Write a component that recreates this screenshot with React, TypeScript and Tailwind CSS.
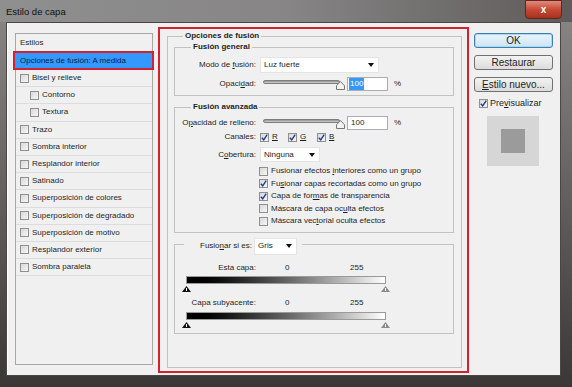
import React from 'react';

const LINE = 'border-[#c2c2c2]';

const STYLES: [string, boolean][] = [
  ['Bisel y relieve', false],
  ['Contorno', true],
  ['Textura', true],
  ['Trazo', false],
  ['Sombra interior', false],
  ['Resplandor interior', false],
  ['Satinado', false],
  ['Superposición de colores', false],
  ['Superposición de degradado', false],
  ['Superposición de motivo', false],
  ['Resplandor exterior', false],
  ['Sombra paralela', false],
];

function Check({ on = false }: { on?: boolean }) {
  return (
    <span className="w-[9px] h-[9px] shrink-0 border border-[#8e8f8f] bg-gradient-to-br from-[#d9d9d9] to-[#f6f6f6] flex items-center justify-center">
      {on && (
        <svg width="7" height="7" viewBox="0 0 7 7">
          <path d="M0.8 3.8 L2.7 5.8 L6.2 0.6" fill="none" stroke="#1d3f91" strokeWidth="1.4" />
        </svg>
      )}
    </span>
  );
}

function Select({ value, className }: { value: string; className: string }) {
  return (
    <div className={`flex items-center justify-between bg-white border border-[#e4e4e4] pl-[3px] pr-[4px] ${className}`}>
      <span>{value}</span>
      <svg width="6" height="4" viewBox="0 0 6 4">
        <path d="M0 0H6L3 4Z" fill="#111" />
      </svg>
    </div>
  );
}

function Slider() {
  return (
    <div className="flex items-start self-stretch ml-[4px]">
      <div className="ml-[3px] mt-[3px] w-[77px] h-[4px] rounded-full border border-[#7d7d7d] bg-gradient-to-b from-[#8f8f8f] to-[#d4d4d4]" />
      <svg className="-ml-[4px] mt-[4px]" width="9" height="9" viewBox="0 0 9 9">
        <path d="M4.5 0.5 L8.5 4.8 V8.5 H0.5 V4.8 Z" fill="#f3f3f3" stroke="#777" />
      </svg>
    </div>
  );
}

function Group({
  title, leadW, headH, lineT, className = '', bodyClass = '', children,
}: {
  title: React.ReactNode; leadW: string; headH: string; lineT: string;
  className?: string; bodyClass?: string; children: React.ReactNode;
}) {
  return (
    <div className={`flex flex-col ${className}`}>
      <div className={`flex ${headH}`}>
        <div className={`${leadW} ${lineT} border-t border-l ${LINE}`} />
        {title}
        <div className={`flex-1 ${lineT} border-t border-r ${LINE}`} />
      </div>
      <div className={`flex flex-col border-l border-r border-b ${LINE} ${bodyClass}`}>{children}</div>
    </div>
  );
}

function Thumb({ color }: { color: string }) {
  return (
    <svg width="9" height="6" viewBox="0 0 9 6">
      <path d="M4.5 0 L9 6 H0 Z" fill={color} />
      <path d="M4.5 2 V5" stroke="#fff" strokeWidth="1" />
    </svg>
  );
}

function Btn({ children, primary = false }: { children: React.ReactNode; primary?: boolean }) {
  return (
    <div
      className={`h-[15px] w-[79px] rounded-[3px] border flex items-center justify-center text-[10px] ${
        primary
          ? 'border-[#3c7fb1] bg-gradient-to-b from-[#eaf5fc] to-[#cde4f3] shadow-[inset_0_0_0_1px_#a9d9f5]'
          : 'border-[#707070] bg-gradient-to-b from-[#f3f3f3] to-[#dcdcdc]'
      }`}
    >
      {children}
    </div>
  );
}

export default function App() {
  return (
    <div className="w-[572px] h-[387px] flex flex-col bg-gradient-to-b from-[#8b8888] via-[#656060] to-[#3b3737] font-['Liberation_Sans',Arial,sans-serif] text-[8px] text-[#1e1e1e] overflow-hidden">
      {/* barra de título */}
      <div className="h-[22px] shrink-0 flex items-start justify-between pl-[6px] pr-[10px] bg-gradient-to-r from-[#8f8f8f] via-[#878585] to-[#5f5b5b]">
        <span className="mt-[6px] text-[9.5px] leading-[12px] text-[#111]">Estilo de capa</span>
        <div className="w-[37px] h-[19px] rounded-b-[4px] border border-[#5a2a22] bg-gradient-to-b from-[#e08a7c] via-[#c74a35] to-[#a8301e] flex items-center justify-center text-white font-bold text-[10px]">
          x
        </div>
      </div>

      {/* área cliente */}
      <div className="ml-[6px] mr-[11px] h-[354px] border border-[#4a4646] shadow-[inset_1px_0_0_#ffffff] bg-[#f0f0f0] flex items-start">
        {/* lista de estilos */}
        <div className="ml-[8px] mt-[10px] w-[138px] h-[332px] border border-[#a6a6a6] flex flex-col">
          <div className="h-[17px] pl-[4px] flex items-center">Estilos</div>
          <div className="-ml-[3px] w-[141px] h-[19px] shrink-0 border-2 border-[#d3222e] bg-[#3399ff] pl-[5px] flex items-center text-[#0c1d3f]">
            Opciones de fusión: A medida
          </div>
          {STYLES.map(([name, sub]) => (
            <div
              key={name}
              className={`h-[17.2px] shrink-0 flex items-center gap-[3px] border-b border-[#dcdcdc] ${sub ? 'pl-[14px]' : 'pl-[4px]'}`}
            >
              <Check />
              <span>{name}</span>
            </div>
          ))}
        </div>

        {/* panel central */}
        <div className="ml-[5px] mt-[4px] w-[311px] h-[346px] border-2 border-[#d3222e] flex flex-col pt-[2px] pl-[7px] pr-[5px] pb-[3px]">
          <Group
            title={<span className="px-[2px] font-bold leading-[10px]">Opciones de fusión</span>}
            leadW="w-[16px]"
            headH="h-[10px]"
            lineT="mt-[5px]"
            className="flex-1"
            bodyClass="flex-1 pl-[6px] pr-[7px] pt-[1px]"
          >
            <Group
              title={<span className="px-[2px] font-bold leading-[10px]">Fusión general</span>}
              leadW="w-[17px]"
              headH="h-[10px]"
              lineT="mt-[5px]"
              bodyClass="pt-[5px] pb-[4px]"
            >
              <div className="h-[16px] flex items-center">
                <span className="w-[81px] text-right">Modo de <span className="underline">f</span>usión:</span>
                <Select value="Luz fuerte" className="ml-[4px] w-[119px] h-[16px]" />
              </div>
              <div className="mt-[4px] h-[14px] flex items-center">
                <span className="w-[81px] text-right">Opaci<span className="underline">d</span>ad:</span>
                <Slider />
                <div className="ml-[2px] w-[41px] h-[14px] bg-white border border-[#abadb3] flex items-center pl-[1px]">
                  <span className="bg-[#3399ff] text-white px-[1px]">100</span>
                </div>
                <span className="ml-[6px]">%</span>
              </div>
            </Group>

            <Group
              title={<span className="px-[2px] font-bold leading-[10px]">Fusión avanzada</span>}
              leadW="w-[17px]"
              headH="h-[10px]"
              lineT="mt-[5px]"
              className="mt-[6px]"
              bodyClass="pt-[4px] pb-[4px]"
            >
              <div className="h-[14px] flex items-center">
                <span className="w-[81px] text-right">O<span className="underline">p</span>acidad de relleno:</span>
                <Slider />
                <div className="ml-[2px] w-[41px] h-[14px] bg-white border border-[#abadb3] flex items-center pl-[3px]">100</div>
                <span className="ml-[6px]">%</span>
              </div>
              <div className="mt-[1px] h-[12px] flex items-center">
                <span className="w-[81px] text-right">Canales:</span>
                <div className="ml-[4px] flex items-center">
                  <span className="w-[28px] flex items-center gap-[3px]"><Check on /><span className="underline">R</span></span>
                  <span className="w-[29px] flex items-center gap-[3px]"><Check on /><span className="underline">G</span></span>
                  <span className="flex items-center gap-[3px]"><Check on /><span className="underline">B</span></span>
                </div>
              </div>
              <div className="mt-[4px] h-[15px] flex items-center">
                <span className="w-[81px] text-right">C<span className="underline">o</span>bertura:</span>
                <Select value="Ninguna" className="ml-[4px] w-[60px] h-[15px]" />
              </div>
              <div className="mt-[3px] flex flex-col pl-[84px]">
                <div className="h-[12.5px] flex items-center gap-[3px]"><Check /><span>Fusionar efectos <span className="underline">i</span>nteriores como un grupo</span></div>
                <div className="h-[12.5px] flex items-center gap-[3px]"><Check on /><span>Fu<span className="underline">s</span>ionar capas recortadas como un grupo</span></div>
                <div className="h-[12.5px] flex items-center gap-[3px]"><Check on /><span>Capa de for<span className="underline">m</span>as de transparencia</span></div>
                <div className="h-[12.5px] flex items-center gap-[3px]"><Check /><span>Máscara de capa oc<span className="underline">u</span>lta efectos</span></div>
                <div className="h-[12.5px] flex items-center gap-[3px]"><Check /><span>Máscara vec<span className="underline">t</span>orial oculta efectos</span></div>
              </div>
            </Group>

            <Group
              title={
                <div className="h-[17px] flex items-center pl-[16px] pr-[5px]">
                  <span>Fusio<span className="underline">n</span>ar si es:</span>
                  <Select value="Gris" className="ml-[2px] w-[43px] h-[17px]" />
                </div>
              }
              leadW="w-[10px]"
              headH="h-[17px]"
              lineT="mt-[6px]"
              className="mt-[5px]"
              bodyClass="pt-[7px] pb-[5px]"
            >
              <div className="h-[12px] flex items-center">
                <span className="w-[81px] text-right">Esta capa:</span>
                <span className="ml-[29px] w-[65px]">0</span>
                <span>255</span>
              </div>
              <div className="mt-[2px] ml-[11px] w-[200px] h-[8px] border border-[#9a9a9a] bg-gradient-to-r from-black to-white" />
              <div className="mt-[2px] ml-[7px] w-[208px] h-[6px] flex justify-between">
                <Thumb color="#111" />
                <Thumb color="#8a8a8a" />
              </div>
              <div className="mt-[5px] h-[12px] flex items-center">
                <span className="w-[81px] text-right">Capa subyacente:</span>
                <span className="ml-[29px] w-[65px]">0</span>
                <span>255</span>
              </div>
              <div className="mt-[3px] ml-[11px] w-[200px] h-[8px] border border-[#9a9a9a] bg-gradient-to-r from-black to-white" />
              <div className="mt-[2px] ml-[7px] w-[208px] h-[6px] flex justify-between">
                <Thumb color="#111" />
                <Thumb color="#8a8a8a" />
              </div>
            </Group>
          </Group>
        </div>

        {/* botones */}
        <div className="ml-[5px] mt-[10px] w-[79px] flex flex-col">
          <Btn primary>OK</Btn>
          <div className="mt-[7px]"><Btn>Restaurar</Btn></div>
          <div className="mt-[7px]"><Btn><span className="underline">E</span>stilo nuevo...</Btn></div>
          <div className="mt-[6px] h-[11px] ml-[5px] flex items-center gap-[2px] text-[9px]">
            <Check on />
            <span>Pre<span className="underline">v</span>isualizar</span>
          </div>
          <div className="mt-[7px] ml-[13px] w-[52px] h-[50px] bg-[#d6d6d6] flex items-center justify-center">
            <div className="w-[24px] h-[24px] bg-[#9b9b9b]" />
          </div>
        </div>
      </div>
    </div>
  );
}
